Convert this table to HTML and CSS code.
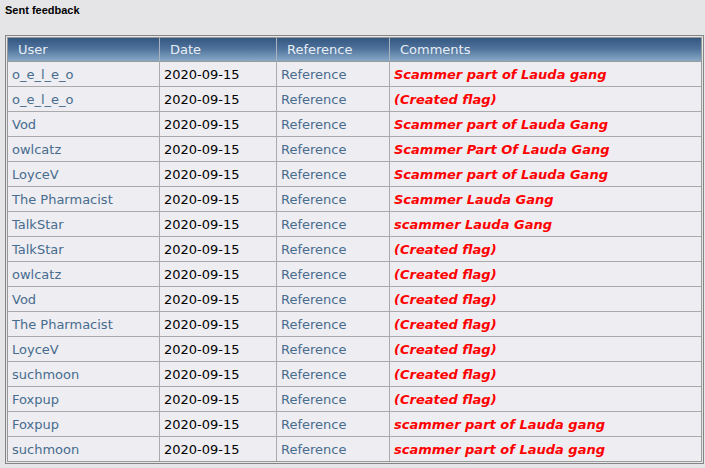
FILE: index.html
```html
<!DOCTYPE html>
<html>
<head>
<meta charset="utf-8">
<link rel="stylesheet" href="styles.css">
</head>
<body>
<div class="title">Sent feedback</div>
<div class="frame">
<table class="fb">
<thead>
<tr><th class="c1">User</th><th class="c2">Date</th><th class="c3">Reference</th><th class="c4">Comments</th></tr>
</thead>
<tbody>
<tr><td><a href="#">o_e_l_e_o</a></td><td>2020-09-15</td><td><a href="#">Reference</a></td><td class="cm">Scammer part of Lauda gang</td></tr>
<tr><td><a href="#">o_e_l_e_o</a></td><td>2020-09-15</td><td><a href="#">Reference</a></td><td class="cm">(Created flag)</td></tr>
<tr><td><a href="#">Vod</a></td><td>2020-09-15</td><td><a href="#">Reference</a></td><td class="cm">Scammer part of Lauda Gang</td></tr>
<tr><td><a href="#">owlcatz</a></td><td>2020-09-15</td><td><a href="#">Reference</a></td><td class="cm">Scammer Part Of Lauda Gang</td></tr>
<tr><td><a href="#">LoyceV</a></td><td>2020-09-15</td><td><a href="#">Reference</a></td><td class="cm">Scammer part of Lauda Gang</td></tr>
<tr><td><a href="#">The Pharmacist</a></td><td>2020-09-15</td><td><a href="#">Reference</a></td><td class="cm">Scammer Lauda Gang</td></tr>
<tr><td><a href="#">TalkStar</a></td><td>2020-09-15</td><td><a href="#">Reference</a></td><td class="cm">scammer Lauda Gang</td></tr>
<tr><td><a href="#">TalkStar</a></td><td>2020-09-15</td><td><a href="#">Reference</a></td><td class="cm">(Created flag)</td></tr>
<tr><td><a href="#">owlcatz</a></td><td>2020-09-15</td><td><a href="#">Reference</a></td><td class="cm">(Created flag)</td></tr>
<tr><td><a href="#">Vod</a></td><td>2020-09-15</td><td><a href="#">Reference</a></td><td class="cm">(Created flag)</td></tr>
<tr><td><a href="#">The Pharmacist</a></td><td>2020-09-15</td><td><a href="#">Reference</a></td><td class="cm">(Created flag)</td></tr>
<tr><td><a href="#">LoyceV</a></td><td>2020-09-15</td><td><a href="#">Reference</a></td><td class="cm">(Created flag)</td></tr>
<tr><td><a href="#">suchmoon</a></td><td>2020-09-15</td><td><a href="#">Reference</a></td><td class="cm">(Created flag)</td></tr>
<tr><td><a href="#">Foxpup</a></td><td>2020-09-15</td><td><a href="#">Reference</a></td><td class="cm">(Created flag)</td></tr>
<tr><td><a href="#">Foxpup</a></td><td>2020-09-15</td><td><a href="#">Reference</a></td><td class="cm">scammer part of Lauda gang</td></tr>
<tr><td><a href="#">suchmoon</a></td><td>2020-09-15</td><td><a href="#">Reference</a></td><td class="cm">scammer part of Lauda gang</td></tr>
</tbody>
</table>
</div>
</body>
</html>
```
FILE: styles.css
```css
html, body {
  margin: 0;
  padding: 0;
  background: #e5e5e8;
}
body {
  font-family: "DejaVu Sans", Verdana, sans-serif;
  font-size: 13px;
  color: #000;
}
.title {
  font-family: "Liberation Sans", Arial, sans-serif;
  font-weight: bold;
  font-size: 11px;
  line-height: 13px;
  padding: 4px 5px 0 5px;
  height: 35px;
  box-sizing: border-box;
}
.frame {
  margin-left: 5px;
  width: 699px;
  box-sizing: border-box;
  border: 1px solid #858585;
  padding: 1px;
}
.fb {
  border-collapse: separate;
  border-spacing: 0;
  border: 1px solid #9a9a9a;
  width: 695px;
  table-layout: fixed;
  background: #eeedf2;
}
.fb th, .fb td {
  box-sizing: border-box;
  text-align: left;
  white-space: nowrap;
  overflow: hidden;
  border-right: 1px solid #aaaaaa;
  border-bottom: 1px solid #aaaaaa;
}
.fb th:last-child, .fb td:last-child {
  border-right: none;
}
.fb tbody tr:last-child td {
  border-bottom: none;
}
.fb th {
  font-weight: normal;
  color: #e8eef5;
  height: 24px;
  padding: 1px 0 0 10px;
  line-height: 22px;
  background: linear-gradient(to bottom, #345780 0%, #4d719a 45%, #88a8c6 100%);
  border-right-color: #a9b4c0;
  border-bottom-color: #9a9a9a;
}
.fb td {
  height: 25px;
  padding: 1px 0 0 4px;
  line-height: 23px;
}
.fb tbody tr:last-child td {
  height: 24px;
}
.c1 { width: 152px; }
.c2 { width: 117px; }
.c3 { width: 113px; }
.c4 { width: 311px; }
.fb a {
  color: #476c8e;
  text-decoration: none;
}
.fb td.cm {
  color: #ff0000;
  font-weight: bold;
  font-style: italic;
}
```
